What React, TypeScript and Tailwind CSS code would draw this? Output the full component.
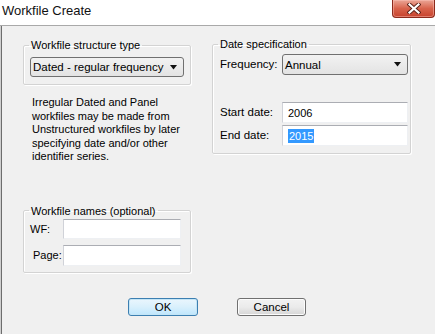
import React from 'react';

const Arrow = () => (
  <svg width="8" height="5" viewBox="0 0 8 5" className="shrink-0">
    <path d="M0 0 H7 L3.5 4.5 Z" fill="#111" />
  </svg>
);

const Combo: React.FC<{ value: string; className?: string }> = ({ value, className }) => (
  <div
    className={`flex items-center justify-between h-[20px] rounded-[3px] border border-[#707070] bg-gradient-to-b from-[#f2f2f2] to-[#e3e3e3] pl-[2px] pr-[5px] ${className ?? ''}`}
  >
    <span className="leading-[14px] text-[11.5px]">{value}</span>
    <Arrow />
  </div>
);

const TextBox: React.FC<{ className?: string; children?: React.ReactNode }> = ({ className, children }) => (
  <div
    className={`flex items-center bg-white border-t border-l border-t-[#abadb3] border-l-[#d0d2d8] border-r border-b border-r-[#eef0f3] border-b-[#eef0f3] pl-[5px] ${className ?? ''}`}
  >
    {children}
  </div>
);

const CloseButton = () => (
  <div className="w-[43px] h-[18px] rounded-b-[4px] border border-t-0 border-[#8c2a1c] bg-gradient-to-b from-[#eaa596] via-[#d8634c] to-[#c7422d] flex items-center justify-center shadow-[inset_0_0_0_1px_rgba(255,200,190,0.45)]">
    <svg width="14" height="11" viewBox="0 0 14 11">
      <path d="M2.5 1.5 L11.5 9.5 M11.5 1.5 L2.5 9.5" stroke="#5a2017" strokeWidth="4" strokeLinecap="square" />
      <path d="M2.5 1.5 L11.5 9.5 M11.5 1.5 L2.5 9.5" stroke="#ffffff" strokeWidth="2.2" strokeLinecap="square" />
    </svg>
  </div>
);

const groupBox =
  'border border-[#d3d3d3] rounded-[2px] shadow-[inset_1px_1px_0_#ffffff,1px_1px_0_#ffffff]';

export default function App() {
  return (
    <div className="w-[435px] h-[334px] bg-[#f0f0f0] flex flex-col overflow-hidden font-['Liberation_Sans',Arial,sans-serif] text-[11px] text-black">
      <div className="h-[26px] shrink-0 bg-white border-b border-[#a9a9a9] flex items-start justify-between">
        <span className="text-[13px] leading-[16px] pl-[2px] pt-[3px] text-[#111]">Workfile Create</span>
        <CloseButton />
      </div>

      <div className="flex-1 flex flex-col shadow-[inset_1px_0_0_#cfcfcf,inset_2px_0_0_#6d6d6d]">
        <div className="flex items-start pl-[23px] pt-[12px]">
          {/* left column */}
          <div className="flex flex-col w-[168px]">
            <fieldset className={`${groupBox} pb-[7px]`}>
              <legend className="ml-[5px] px-[2px] leading-[14px]">Workfile structure type</legend>
              <Combo value="Dated - regular frequency" className="mt-[5px] ml-[6px] w-[154px]" />
            </fieldset>

            <p className="mt-[11px] ml-[9px] leading-[13.6px] whitespace-nowrap">
              Irregular Dated and Panel
              <br />
              workfiles may be made from
              <br />
              Unstructured workfiles by later
              <br />
              specifying date and/or other
              <br />
              identifier series.
            </p>

            <fieldset className={`${groupBox} mt-[40px] pb-[6px]`}>
              <legend className="ml-[5px] px-[2px] leading-[14px]">Workfile names (optional)</legend>
              <div className="flex items-center mt-[1px]">
                <span className="w-[39px] pl-[6px]">WF:</span>
                <TextBox className="w-[118px] h-[20px]" />
              </div>
              <div className="flex items-center mt-[6px]">
                <span className="w-[39px] pl-[9px]">Page:</span>
                <TextBox className="w-[118px] h-[21px]" />
              </div>
            </fieldset>
          </div>

          {/* right column */}
          <fieldset className={`${groupBox} ml-[21px] -mt-[1px] w-[199px] pb-[7px]`}>
            <legend className="ml-[5px] px-[2px] leading-[14px]">Date specification</legend>
            <div className="flex items-center mt-[3px]">
              <span className="w-[69px] pl-[7px] text-[11.5px]">Frequency:</span>
              <Combo value="Annual" className="w-[126px] h-[21px]" />
            </div>
            <div className="flex items-center mt-[27px]">
              <span className="w-[69px] pl-[7px] text-[11.5px]">Start date:</span>
              <TextBox className="w-[126px] h-[21px]">
                <span className="leading-[14px]">2006</span>
              </TextBox>
            </div>
            <div className="flex items-center mt-[2px]">
              <span className="w-[69px] pl-[7px] text-[11.5px]">End date:</span>
              <TextBox className="w-[126px] h-[21px]">
                <span className="leading-[14px] bg-[#3399ff] text-white px-[1px]">2015</span>
              </TextBox>
            </div>
          </fieldset>
        </div>

        <div className="flex pl-[128px] mt-[25px] gap-[39px]">
          <button className="w-[70px] h-[18px] rounded-[3px] border border-[#3c7fb1] bg-gradient-to-b from-[#eaf6fd] via-[#d9f0fc] to-[#bee6fd] shadow-[inset_0_0_0_1px_#c4e5f6] text-[11.5px] leading-[14px]">
            OK
          </button>
          <button className="w-[69px] h-[18px] rounded-[3px] border border-[#707070] bg-gradient-to-b from-[#f2f2f2] via-[#ebebeb] to-[#d6d6d6] shadow-[inset_0_0_0_1px_#fcfcfc] text-[11.5px] leading-[14px]">
            Cancel
          </button>
        </div>
      </div>
    </div>
  );
}
